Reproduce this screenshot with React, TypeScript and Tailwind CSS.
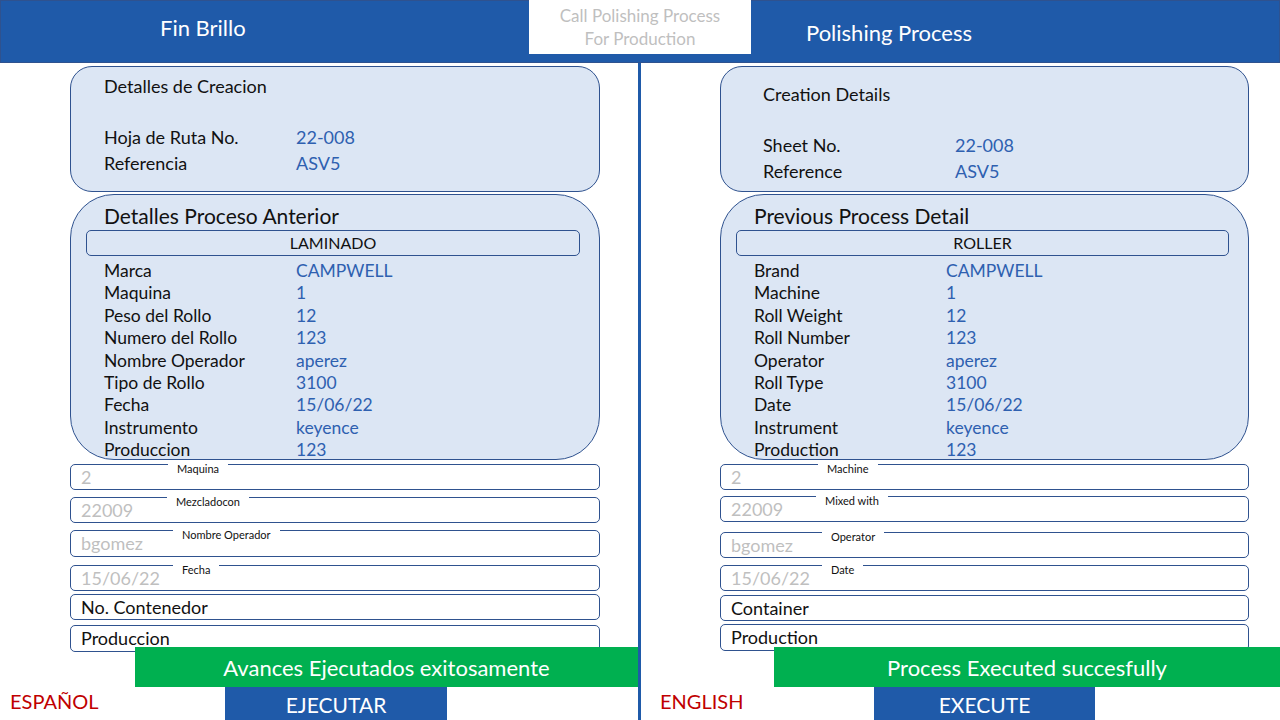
import React from 'react';

const FONT = { fontFamily: 'Lato, "Open Sans", "Liberation Sans", sans-serif' };

type Row = [string, string];

interface Side {
  creationTitle: string;
  creationRows: Row[];
  creationPad: string;
  prevTitle: string;
  prevBox: string;
  prevRows: Row[];
  inputs: { value: string; label: string; left: string; mt: string; h: string }[];
  container: string;
  containerMt: string;
  production: string;
  productionMt: string;
  banner: string;
  bannerWrap: string;
  lang: string;
  langWrap: string;
  button: string;
  buttonW: string;
  cardWrap: string;
}

const spanish: Side = {
  creationTitle: 'Detalles de Creacion',
  creationRows: [
    ['Hoja de Ruta No.', '22-008'],
    ['Referencia', 'ASV5'],
  ],
  creationPad: 'pt-[7px] pl-[33px]',
  prevTitle: 'Detalles Proceso Anterior',
  prevBox: 'LAMINADO',
  prevRows: [
    ['Marca', 'CAMPWELL'],
    ['Maquina', '1'],
    ['Peso del Rollo', '12'],
    ['Numero del Rollo', '123'],
    ['Nombre Operador', 'aperez'],
    ['Tipo de Rollo', '3100'],
    ['Fecha', '15/06/22'],
    ['Instrumento', 'keyence'],
    ['Produccion', '123'],
  ],
  inputs: [
    { value: '2', label: 'Maquina', left: 'left-[97px]', mt: 'mt-[4px]', h: 'h-[26px]' },
    { value: '22009', label: 'Mezcladocon', left: 'left-[96px]', mt: 'mt-[7px]', h: 'h-[26px]' },
    { value: 'bgomez', label: 'Nombre Operador', left: 'left-[102px]', mt: 'mt-[7px]', h: 'h-[27px]' },
    { value: '15/06/22', label: 'Fecha', left: 'left-[102px]', mt: 'mt-[8px]', h: 'h-[26px]' },
  ],
  container: 'No. Contenedor',
  containerMt: 'mt-[3px]',
  production: 'Produccion',
  productionMt: 'mt-[5px]',
  banner: 'Avances Ejecutados exitosamente',
  bannerWrap: 'ml-[135px] -mt-[5px]',
  lang: 'ESPAÑOL',
  langWrap: 'w-[225px] pl-[10px]',
  button: 'EJECUTAR',
  buttonW: 'w-[222px]',
  cardWrap: 'pl-[70px] pr-[38px]',
};

const english: Side = {
  creationTitle: 'Creation Details',
  creationRows: [
    ['Sheet No.', '22-008'],
    ['Reference', 'ASV5'],
  ],
  creationPad: 'pt-[15px] pl-[42px]',
  prevTitle: 'Previous Process Detail',
  prevBox: 'ROLLER',
  prevRows: [
    ['Brand', 'CAMPWELL'],
    ['Machine', '1'],
    ['Roll Weight', '12'],
    ['Roll Number', '123'],
    ['Operator', 'aperez'],
    ['Roll Type', '3100'],
    ['Date', '15/06/22'],
    ['Instrument', 'keyence'],
    ['Production', '123'],
  ],
  inputs: [
    { value: '2', label: 'Machine', left: 'left-[97px]', mt: 'mt-[4px]', h: 'h-[26px]' },
    { value: '22009', label: 'Mixed with', left: 'left-[95px]', mt: 'mt-[6px]', h: 'h-[26px]' },
    { value: 'bgomez', label: 'Operator', left: 'left-[101px]', mt: 'mt-[10px]', h: 'h-[26px]' },
    { value: '15/06/22', label: 'Date', left: 'left-[101px]', mt: 'mt-[7px]', h: 'h-[26px]' },
  ],
  container: 'Container',
  containerMt: 'mt-[4px]',
  production: 'Production',
  productionMt: 'mt-[3px]',
  banner: 'Process Executed succesfully',
  bannerWrap: 'ml-[133px] -mt-[4px]',
  lang: 'ENGLISH',
  langWrap: 'w-[233px] pl-[19px]',
  button: 'EXECUTE',
  buttonW: 'w-[221px]',
  cardWrap: 'pl-[79px] pr-[31px]',
};

function Panel({ s }: { s: Side }) {
  return (
    <div className="flex flex-col h-full">
      <div className={s.cardWrap}>
        {/* creation details */}
        <div className={`mt-[3px] h-[126px] rounded-[22px] border border-[#2f528f] bg-[#dce6f4] ${s.creationPad}`}>
          <div className="text-[18px] leading-[24px] text-[#111]">{s.creationTitle}</div>
          <div className="mt-[26px]">
            {s.creationRows.map(([k, v]) => (
              <div key={k} className="flex text-[18px] leading-[26px]">
                <span className="w-[192px] text-[#111]">{k}</span>
                <span className="text-[#2e60b0]">{v}</span>
              </div>
            ))}
          </div>
        </div>

        {/* previous process */}
        <div className="mt-[2px] h-[266px] rounded-[44px] border border-[#2f528f] bg-[#dce6f4] pt-[9px] pl-[15px] pr-[19px] overflow-hidden">
          <div className="pl-[18px] text-[21px] leading-[24px] text-[#111]">{s.prevTitle}</div>
          <div className="mt-[2px] h-[26px] rounded-[5px] border border-[#2f528f] flex items-center justify-center text-[16px] text-[#111]">
            {s.prevBox}
          </div>
          <div className="mt-[4px] pl-[18px]">
            {s.prevRows.map(([k, v]) => (
              <div key={k} className="flex text-[17.5px] leading-[22.4px]">
                <span className="w-[192px] text-[#111]">{k}</span>
                <span className="text-[#2e60b0]">{v}</span>
              </div>
            ))}
          </div>
        </div>

        {/* inputs with floating labels */}
        {s.inputs.map((f) => (
          <div
            key={f.label}
            className={`relative ${f.mt} ${f.h} rounded-[5px] border border-[#2f528f] flex items-center pl-[10px] text-[18px] text-[#bfbfbf]`}
          >
            {f.value}
            <span className={`absolute ${f.left} -top-[3px] bg-white px-[9px] text-[11px] leading-[14px] text-[#111]`}>
              {f.label}
            </span>
          </div>
        ))}
        <div className={`${s.containerMt} h-[26px] rounded-[5px] border border-[#2f528f] flex items-center pl-[10px] text-[18px] text-[#111]`}>
          {s.container}
        </div>
        <div className={`${s.productionMt} h-[27px] rounded-[5px] border border-[#2f528f] flex items-center pl-[10px] text-[18px] text-[#111]`}>
          {s.production}
        </div>
      </div>

      <div className={`relative ${s.bannerWrap} h-[40px] bg-[#00b050] flex items-center justify-center text-white text-[22px]`}>
        {s.banner}
      </div>

      <div className="flex items-start flex-1">
        <div className={`${s.langWrap} pt-[1px] text-[20px] leading-[26px] text-[#c00000]`}>{s.lang}</div>
        <div className={`${s.buttonW} h-full bg-[#1f5aa9] flex items-end justify-center text-white text-[21px] leading-[30px]`}>
          {s.button}
        </div>
      </div>
    </div>
  );
}

export default function App() {
  return (
    <div className="w-[1280px] h-[720px] overflow-hidden bg-white flex flex-col" style={FONT}>
      {/* header */}
      <div className="h-[63px] bg-[#1f5aa9] border border-[#2f528f] flex items-start">
        <div className="w-[528px] pl-[159px] pt-[14px] text-white text-[22px] leading-[26px]">Fin Brillo</div>
        <div className="w-[222px] h-[54px] -mt-px bg-white flex flex-col items-center pt-[4px] text-[17px] leading-[23px] text-[#bfbfbf]">
          <span>Call Polishing Process</span>
          <span>For Production</span>
        </div>
        <div className="pl-[55px] pt-[19px] text-white text-[22px] leading-[26px]">Polishing Process</div>
      </div>

      <div className="flex flex-1">
        <div className="w-[638px] h-full">
          <Panel s={spanish} />
        </div>
        <div className="w-[3px] bg-[#1f5aa9]" />
        <div className="flex-1 h-full">
          <Panel s={english} />
        </div>
      </div>
    </div>
  );
}
